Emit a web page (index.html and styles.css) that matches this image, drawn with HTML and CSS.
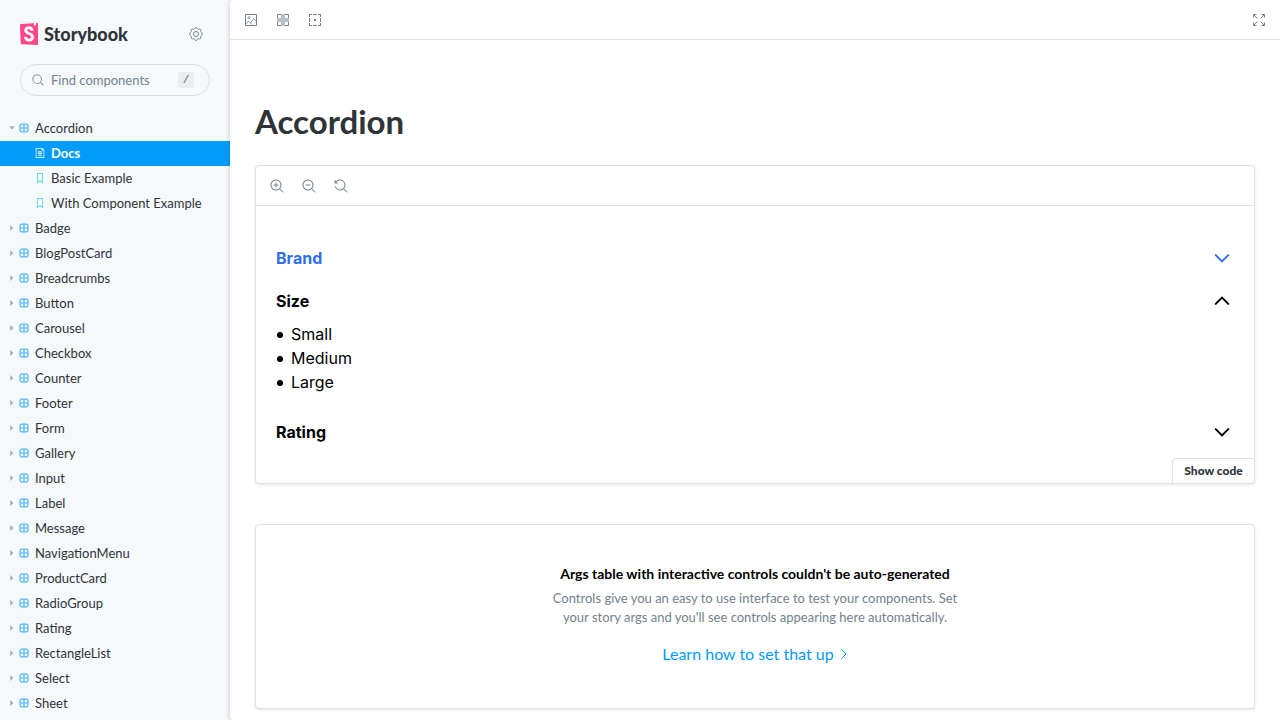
FILE: index.html
```html
<!DOCTYPE html>
<html lang="en">
<head>
<meta charset="utf-8">
<title>Accordion - Docs - Storybook</title>
<link rel="stylesheet" href="styles.css">
</head>
<body>
<svg class="sprite" aria-hidden="true">
  <symbol id="component" viewBox="0 0 14 14"><path fill-rule="evenodd" d="M3.5 1.004a2.5 2.5 0 00-2.5 2.5v7a2.5 2.5 0 002.5 2.5h7a2.5 2.5 0 002.5-2.5v-7a2.5 2.5 0 00-2.5-2.5h-7zm8.5 5.5H7.5v-4.5h3a1.5 1.5 0 011.5 1.5v3zm0 1v3a1.5 1.5 0 01-1.5 1.5h-3v-4.5H12zm-5.5 4.5v-4.5H2v3a1.5 1.5 0 001.5 1.5h3zM2 6.504h4.5v-4.5h-3a1.5 1.5 0 00-1.5 1.5v3z" stroke="currentColor" stroke-width=".4"/></symbol>
  <symbol id="bookmark" viewBox="0 0 14 14"><path fill-rule="evenodd" d="M3.5 0h7a.5.5 0 01.5.5v13a.5.5 0 01-.454.498.462.462 0 01-.371-.118L7 11.159l-3.175 2.720a.46.46 0 01-.379.118A.5.5 0 013 13.500V.5a.5.5 0 01.5-.5zM4 12.413l2.664-2.284a.454.454 0 01.377-.128.498.498 0 01.284.12L10 12.412V1H4v11.413z"/></symbol>
  <symbol id="document" viewBox="0 0 14 14"><path d="M4 5.5a.5.5 0 01.5-.5h5a.5.5 0 010 1h-5a.5.5 0 01-.5-.5zM4.5 7.5a.5.5 0 000 1h5a.5.5 0 000-1h-5zM4 10.5a.5.5 0 01.5-.5h5a.5.5 0 010 1h-5a.5.5 0 01-.5-.5z" stroke="currentColor" stroke-width=".4"/><path fill-rule="evenodd" d="M1.5 0a.5.5 0 00-.5.5v13a.5.5 0 00.5.5h11a.5.5 0 00.5-.5V3.207a.5.5 0 00-.146-.353L10.146.146A.5.5 0 009.793 0H1.5zM2 1h7.5v2a.5.5 0 00.5.5h2V13H2V1z"/></symbol>
  <symbol id="lens" viewBox="0 0 14 14"><path fill-rule="evenodd" d="M9.544 10.206a5.5 5.5 0 11.662-.662.5.5 0 01.148.102l3 3a.5.5 0 01-.708.708l-3-3a.5.5 0 01-.102-.148zM10.5 6a4.5 4.5 0 11-9 0 4.5 4.5 0 019 0z"/></symbol>
  <symbol id="caret" viewBox="0 0 8 8"><path d="M2.200 1v6L5.400 4z"/></symbol>
  <symbol id="chevron" viewBox="0 0 24 24"><path d="M4.500 8.500l7.500 7.500 7.500-7.500" fill="none" stroke="currentColor" stroke-width="2.400" stroke-linecap="round"/></symbol>
</svg>

<div class="app">
  <aside class="sidebar">
    <header class="brand">
      <a class="brand-link" href="#">
        <svg class="brand-mark" viewBox="0 0 18 22" aria-hidden="true"><path d="M0 2.300Q0 1.200 1.100 1.100L17 0Q18 0 18 1v20q0 1.100-1.100 1L1.800 21.300Q.8 21.200.7 20z" fill="#ff4785"/><path d="M14 .2l2-.1v2.700l-1-.7-1.100.8z" fill="#fff"/><path d="M12.200 7.800C12 3.700 5.500 3.900 5.700 7.400 5.900 11 12.700 10 12.600 14 12.500 18 5.400 18.200 5.500 13.900" fill="none" stroke="#fff" stroke-width="2.800"/></svg>
        <span>Storybook</span>
      </a>
      <button class="icon-btn" aria-label="Settings"><svg class="icon" viewBox="0 0 14 14" fill="none" stroke="currentColor"><circle cx="7" cy="7" r="2.500"/><path stroke-linejoin="round" d="M5.500 1.700C6 .2 8 .2 8.500 1.700 9 2.400 9.300 2.500 9.900 2.200 11.200 1.600 12.400 2.800 11.800 4.100 11.500 4.700 11.600 5 12.300 5.500 13.800 6 13.800 8 12.300 8.500 11.600 9 11.500 9.300 11.800 9.900 12.400 11.200 11.200 12.400 9.900 11.800 9.300 11.500 9 11.600 8.500 12.300 8 13.800 6 13.800 5.500 12.300 5 11.600 4.700 11.500 4.100 11.800 2.800 12.400 1.600 11.200 2.200 9.900 2.500 9.300 2.400 9 1.700 8.500.2 8 .2 6 1.700 5.500 2.400 5 2.500 4.700 2.200 4.100 1.600 2.800 2.800 1.600 4.100 2.200 4.700 2.500 5 2.400 5.500 1.700z"/></svg></button>
    </header>
    <label class="search">
      <svg class="icon-s" aria-hidden="true"><use href="#lens"/></svg>
      <input type="text" placeholder="Find components" aria-label="Find components">
      <kbd>/</kbd>
    </label>
    <nav class="tree" id="tree">
      <a class="item" href="#"><svg class="caret open"><use href="#caret"/></svg><svg class="kind"><use href="#component"/></svg>Accordion</a>
      <a class="item child selected" href="#"><svg class="kind"><use href="#document"/></svg>Docs</a>
      <a class="item child story" href="#"><svg class="kind"><use href="#bookmark"/></svg>Basic Example</a>
      <a class="item child story" href="#"><svg class="kind"><use href="#bookmark"/></svg>With Component Example</a>
    </nav>
  </aside>

  <main class="main">
    <div class="toolbar">
      <button class="icon-btn" aria-label="Change background"><svg class="icon" viewBox="0 0 14 14" fill="none" stroke="currentColor"><path d="M1.500 1.500h11v11h-11z"/><path d="M2 11l2.500-3 2 2L9.800 5.500 12 8.500M6.500 10L8 11.500" stroke-width=".8"/><circle cx="5" cy="4.700" r="1" stroke-width=".8"/></svg></button>
      <button class="icon-btn" aria-label="Apply grid"><svg class="icon" viewBox="0 0 14 14" fill="none" stroke="currentColor"><path d="M5 1.500H1.500V5M9 1.500h3.500V5M1.500 9v3.500H5M9 12.500h3.500V9"/><path d="M5 1h4v4h4v4H9v4H5V9H1V5h4z" fill="currentColor" fill-opacity=".5" stroke="none"/></svg></button>
      <button class="icon-btn" aria-label="Enable outline"><svg class="icon" viewBox="0 0 14 14" fill="none" stroke="currentColor"><path d="M1 1.500h3M5 1.500h4M10 1.500h3M1 12.500h3M5 12.500h4M10 12.500h3M1.500 1v3M1.500 5v4M1.500 10v3M12.500 1v3M12.500 5v4M12.500 10v3"/><path d="M6 6h2v2H6z" fill="currentColor" stroke="none"/></svg></button>
      <button class="icon-btn end" aria-label="Go full screen"><svg class="icon" viewBox="0 0 14 14" fill="none" stroke="currentColor"><path d="M1.500 4.500v-3h3M1.500 1.500l4 4M9.500 1.500h3v3M12.500 1.500l-4 4M1.500 9.500v3h3M1.500 12.500l4-4M9.500 12.500h3v-3M12.500 12.500l-4-4"/></svg></button>
    </div>

    <article class="docs">
      <h1>Accordion</h1>

      <section class="card preview">
        <div class="toolbar">
          <button class="icon-btn" aria-label="Zoom in"><svg class="icon" viewBox="0 0 14 14"><use href="#lens"/><path d="M6 3.500a.5.5 0 01.5.5v1.500H8a.5.5 0 010 1H6.500V8a.5.5 0 01-1 0V6.500H4a.5.5 0 010-1h1.500V4a.5.5 0 01.5-.5z"/></svg></button>
          <button class="icon-btn" aria-label="Zoom out"><svg class="icon" viewBox="0 0 14 14"><use href="#lens"/><path d="M4 5.500a.5.5 0 000 1h4a.5.5 0 000-1H4z"/></svg></button>
          <button class="icon-btn" aria-label="Reset zoom"><svg class="icon" viewBox="0 0 14 14"><path d="M1.500 2.837V1.500a.5.5 0 00-1 0V4a.5.5 0 00.5.5h2.500a.5.5 0 000-1H2.258a4.500 4.500 0 11-.496 4.016.5.5 0 10-.942.337 5.502 5.502 0 008.724 2.353.5.5 0 00.102.148l3 3a.5.5 0 00.708-.708l-3-3a.5.5 0 00-.148-.102A5.500 5.500 0 101.500 2.837z"/></svg></button>
        </div>
        <div class="accordion">
          <button class="acc-head active" aria-expanded="false">Brand<svg class="chev"><use href="#chevron"/></svg></button>
          <button class="acc-head" aria-expanded="true">Size<svg class="chev up"><use href="#chevron"/></svg></button>
          <ul>
            <li>Small</li>
            <li>Medium</li>
            <li>Large</li>
          </ul>
          <button class="acc-head" aria-expanded="false">Rating<svg class="chev"><use href="#chevron"/></svg></button>
        </div>
        <button class="show-code">Show code</button>
      </section>

      <section class="card args">
        <h2>Args table with interactive controls couldn't be auto-generated</h2>
        <p>Controls give you an easy to use interface to test your components. Set your story args and you'll see controls appearing here automatically.</p>
        <a class="learn" href="#">Learn how to set that up<svg class="next" viewBox="0 0 8 12" aria-hidden="true"><path d="M1.500 1.500L6 6l-4.500 4.500" fill="none" stroke="currentColor"/></svg></a>
      </section>
    </article>
  </main>
</div>
<script src="tree.js"></script>
</body>
</html>
```
FILE: styles.css
```css
* { box-sizing: border-box; }

body {
  margin: 0;
  background: #f6f9fc;
  color: #2e3438;
  font-family: "Lato", "Noto Sans", sans-serif;
  font-size: 13px;
}

button { border: 0; padding: 0; background: none; color: inherit; font: inherit; cursor: pointer; }
a { color: inherit; text-decoration: none; }
svg { flex: none; fill: currentColor; }
svg[fill="none"] { fill: none; }
.sprite { display: none; }

.app { display: flex; height: 100vh; }

.sidebar { width: 230px; flex: none; overflow: auto; }
.brand { display: flex; align-items: center; justify-content: space-between; height: 28px; margin: 20px 0 16px; padding: 0 20px; }
.brand-link { display: flex; align-items: center; gap: 6px; font-size: 18px; font-weight: 900; line-height: 28px; }
.brand-mark { width: 18px; height: 22px; }
.icon-btn { display: flex; align-items: center; justify-content: center; width: 28px; height: 28px; color: #73828c; }
.icon { width: 14px; height: 14px; }

.search { display: flex; align-items: center; gap: 7px; height: 32px; margin: 0 20px 20px; padding: 0 15px 0 11px; border: 1px solid #d3dfe8; border-radius: 16px; color: #73828c; }
.search input { flex: 1; min-width: 0; padding: 0; border: 0; outline: 0; background: none; color: inherit; font: inherit; }
.search input::placeholder { color: #73828c; opacity: 1; }
.search kbd { width: 16px; height: 16px; border-radius: 3px; background: #e9edf0; color: #5c6870; font: 11px/16px "Liberation Mono", monospace; text-align: center; }
.icon-s { width: 12px; height: 12px; }

.item { display: flex; align-items: center; height: 25px; padding: 0 0 2px 8px; line-height: 22px; white-space: nowrap; }
.caret { width: 8px; height: 8px; margin-right: 3px; color: #a6b0b7; }
.caret.open { transform: rotate(90deg); }
.kind { width: 10px; height: 10px; margin-right: 6px; color: #029cfd; opacity: 0.8; }
.child { padding-left: 35px; }
.story .kind { color: #37d5d3; opacity: 1; }
.selected { background: #029cfd; color: #fff; font-weight: 700; }
.selected .kind { color: #fff; opacity: 1; }

.main { flex: 1; min-width: 0; overflow: auto; border-radius: 4px 0 0 4px; background: #fff; box-shadow: 0 1px 5px rgba(0, 0, 0, 0.2); }
.toolbar { display: flex; align-items: center; gap: 4px; height: 40px; padding: 0 7px; border-bottom: 1px solid #dfe3e6; }
.end { margin-left: auto; }

.docs { padding: 63px 25px 10px; }
h1 { margin: 0 0 26px; font-size: 33px; font-weight: 700; line-height: 36px; }
.card { border: 1px solid #dbe3ea; border-radius: 4px; background: #fff; box-shadow: 0 1px 3px rgba(0, 0, 0, 0.1); }

.preview { margin-bottom: 40px; }
.accordion { padding: 30px 20px 5px; color: #000; font: 16px/24px "Inter", sans-serif; }
.acc-head { display: flex; align-items: center; justify-content: space-between; width: 100%; height: 43px; font-weight: 700; }
.active { color: #2f6fed; }
.chev { width: 20px; height: 20px; margin-right: 2px; }
.up { transform: rotate(180deg); }
.accordion ul { margin: 0 0 16px; padding: 0; list-style: none; }
.accordion li { display: flex; align-items: center; gap: 8px; padding-left: 1px; }
.accordion li::before { content: ""; width: 6px; height: 6px; margin-top: 2px; border-radius: 50%; background: #000; }
.show-code { display: block; min-width: 82px; height: 25px; margin-left: auto; padding: 0 10px; border: solid #dbe3ea; border-width: 1px 0 0 1px; border-radius: 4px 0 0 0; font-size: 12px; font-weight: 900; line-height: 24px; }

.args { display: flex; flex-direction: column; align-items: center; padding: 39px 20px 42px; text-align: center; }
.args h2 { margin: 0 0 5px; color: #000; font-size: 14px; font-weight: 700; line-height: 20px; }
.args p { max-width: 415px; margin: 0 0 15px; color: #73828c; line-height: 19px; }
.learn { display: flex; align-items: center; gap: 6px; color: #029cfd; font-size: 16px; line-height: 24px; }
.next { width: 8px; height: 12px; }
```
FILE: tree.js
```js
const names = ["Badge", "BlogPostCard", "Breadcrumbs", "Button", "Carousel", "Checkbox", "Counter", "Footer", "Form", "Gallery", "Input", "Label", "Message", "NavigationMenu", "ProductCard", "RadioGroup", "Rating", "RectangleList", "Select", "Sheet"];
const tree = document.getElementById("tree");
for (const name of names) {
  tree.insertAdjacentHTML("beforeend", `<a class="item" href="#"><svg class="caret"><use href="#caret"/></svg><svg class="kind"><use href="#component"/></svg>${name}</a>`);
}
```
